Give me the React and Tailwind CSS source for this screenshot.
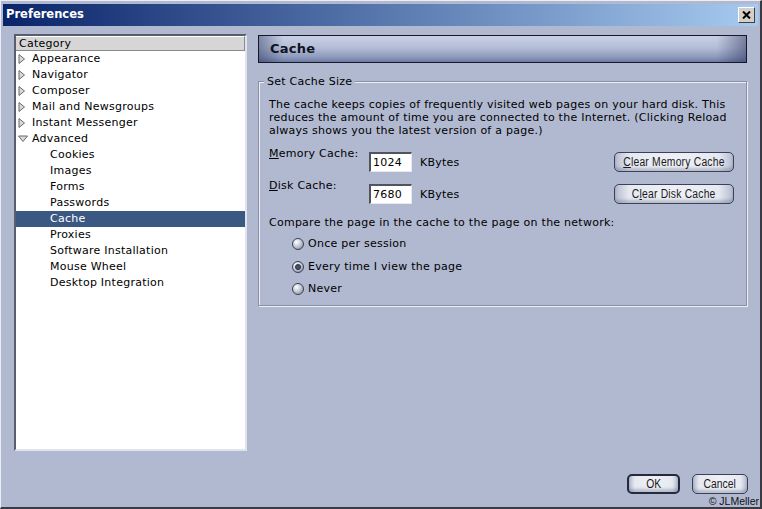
import React from "react";

const ui = { fontFamily: '"DejaVu Sans", Verdana, sans-serif' };
const narrow = { fontFamily: '"Liberation Sans", Arial, sans-serif' };

const tree = [
  { label: "Appearance", level: 0, twisty: "right" },
  { label: "Navigator", level: 0, twisty: "right" },
  { label: "Composer", level: 0, twisty: "right" },
  { label: "Mail and Newsgroups", level: 0, twisty: "right" },
  { label: "Instant Messenger", level: 0, twisty: "right" },
  { label: "Advanced", level: 0, twisty: "down" },
  { label: "Cookies", level: 1 },
  { label: "Images", level: 1 },
  { label: "Forms", level: 1 },
  { label: "Passwords", level: 1 },
  { label: "Cache", level: 1, selected: true },
  { label: "Proxies", level: 1 },
  { label: "Software Installation", level: 1 },
  { label: "Mouse Wheel", level: 1 },
  { label: "Desktop Integration", level: 1 },
];

const Twisty = ({ dir }) =>
  dir === "down" ? (
    <svg width="10" height="8" viewBox="0 0 10 8" className="shrink-0">
      <polygon points="0.5,1 9.5,1 5,6.5" fill="#d8d8d8" stroke="#6a6a6a" strokeWidth="1" />
    </svg>
  ) : (
    <svg width="8" height="10" viewBox="0 0 8 10" className="shrink-0">
      <polygon points="1,0.5 6.5,5 1,9.5" fill="#d8d8d8" stroke="#6a6a6a" strokeWidth="1" />
    </svg>
  );

const Radio = ({ checked }) => (
  <span className="w-[12px] h-[12px] rounded-full border border-[#3a3f52] bg-[radial-gradient(circle_at_35%_30%,#ffffff_0%,#c8ccd8_45%,#7c8296_100%)] flex items-center justify-center shrink-0">
    {checked && <span className="w-[6px] h-[6px] rounded-full bg-[#4a5068] border border-[#2a2e3c]" />}
  </span>
);

// gel style button, label squeezed horizontally like the narrow system font
const GelButton = ({ children, className = "", strong }) => (
  <button
    className={`h-[20px] rounded-[5px] ${
      strong ? "border-2 border-[#252a3c]" : "border border-[#3c4156]"
    } bg-[linear-gradient(to_right,#b5bccf_0%,#e6e9f1_12%,#eef0f5_50%,#e6e9f1_88%,#b5bccf_100%)] shadow-[inset_0_-3px_3px_rgba(90,100,130,0.35)] text-[12px] text-[#1a1a1a] flex items-center justify-center whitespace-nowrap ${className}`}
    style={narrow}
  >
    <span className="inline-block scale-x-[0.86]">{children}</span>
  </button>
);

const TextBox = ({ value }) => (
  <div className="w-[43px] h-[20px] bg-white border-t-2 border-l-2 border-t-[#50545e] border-l-[#50545e] border-b border-r border-b-[#e8eaf0] border-r-[#e8eaf0] pl-[2px] leading-[17px] text-[11px] text-black">
    {value}
  </div>
);

export default function App() {
  return (
    <div
      className="relative w-[762px] h-[509px] bg-[#b1b9d1] border-t border-l border-t-[#eceef4] border-l-[#eceef4] border-r-2 border-b-2 border-r-[#3a3a44] border-b-[#3a3a44] p-[2px] overflow-hidden"
      style={ui}
    >
      {/* Title bar */}
      <div className="mt-[1px] h-[22px] bg-[linear-gradient(to_right,#0a246a,#a6caf0)] flex items-center pl-[3px] pr-[3px]">
        <span className="text-white font-bold text-[11.5px]">Preferences</span>
        <div className="ml-auto w-[17px] h-[16px] bg-[#d4d0c8] border border-t-white border-l-white border-r-[#404040] border-b-[#404040] flex items-center justify-center">
          <svg width="9" height="8" viewBox="0 0 9 8">
            <path d="M1 0.5 L8 7.5 M8 0.5 L1 7.5" stroke="#000" strokeWidth="2" />
          </svg>
        </div>
      </div>

      <div className="pt-[8px] pl-[11px] pr-[10px] tracking-[0.25px]">
        <div className="flex gap-[11px]">
          {/* Category tree */}
          <div className="w-[233px] h-[417px] bg-white border-2 border-t-[#5a5e6c] border-l-[#5a5e6c] border-b-[#dfe3ee] border-r-[#dfe3ee]">
            <div className="h-[15px] bg-[#d6d6d6] border-b border-r border-[#8a8a8a] border-t border-t-white pl-[3px] text-[11px] leading-[13px] text-black">
              Category
            </div>
            {tree.map((r) => (
              <div
                key={r.label}
                className={`h-[16px] flex items-center text-[11px] ${
                  r.selected ? "bg-[#3b5883] text-white" : "text-black"
                }`}
              >
                <span className="w-[16px] pl-[2px] flex items-center justify-start">
                  {r.twisty && <Twisty dir={r.twisty} />}
                </span>
                {r.level === 1 && <span className="w-[18px]" />}
                <span>{r.label}</span>
              </div>
            ))}
          </div>

          {/* Right side */}
          <div className="w-[489px]">
            <div className="mt-[1px] h-[28px] border border-[#14182a] bg-[linear-gradient(to_right,rgba(40,50,90,0.45)_0%,rgba(40,50,90,0)_5%,rgba(40,50,90,0)_94%,rgba(40,50,90,0.5)_100%),linear-gradient(to_bottom,#c9d0e4_0%,#b4bdd7_45%,#8f9bbd_80%,#6d7aa2_100%)] flex items-center pl-[11px]">
              <span className="font-bold text-[13px] text-[#10141f]">Cache</span>
            </div>

            <div className="relative mt-[18px] border border-[#8890a8] shadow-[inset_1px_1px_0_#eef0f6,1px_1px_0_#eef0f6] pt-[16px] pl-[10px] pr-[12px] pb-[4px] text-[11px] text-black">
              <span className="absolute -top-[7px] left-[5px] px-[3px] bg-[#b1b9d1] leading-[13px]">
                Set Cache Size
              </span>

              <p className="leading-[13px]">
                The cache keeps copies of frequently visited web pages on your hard disk. This reduces the amount of time you are connected to the Internet. (Clicking Reload always shows you the latest version of a page.)
              </p>

              <div className="mt-[10px] h-[25px] flex items-start">
                <span className="w-[100px] leading-[13px]">
                  <span className="underline">M</span>emory Cache:
                </span>
                <div className="mt-[5px]">
                  <TextBox value="1024" />
                </div>
                <span className="ml-[8px] mt-[9px] leading-[13px]">KBytes</span>
                <GelButton className="ml-auto mt-[5px] w-[120px]">
                  <span className="underline">C</span>lear Memory Cache
                </GelButton>
              </div>

              <div className="mt-[7px] h-[25px] flex items-start">
                <span className="w-[100px] leading-[13px]">
                  <span className="underline">D</span>isk Cache:
                </span>
                <div className="mt-[5px]">
                  <TextBox value="7680" />
                </div>
                <span className="ml-[8px] mt-[9px] leading-[13px]">KBytes</span>
                <GelButton className="ml-auto mt-[5px] w-[120px]">
                  C<span className="underline">l</span>ear Disk Cache
                </GelButton>
              </div>

              <div className="mt-[12px] leading-[13px]">
                Compare the page in the cache to the page on the network:
              </div>

              <div className="mt-[4px] pl-[23px]">
                {[
                  ["Once per session", false],
                  ["Every time I view the page", true],
                  ["Never", false],
                ].map(([label, checked]) => (
                  <div key={label} className="h-[22.5px] flex items-center gap-[4px]">
                    <Radio checked={checked} />
                    <span>{label}</span>
                  </div>
                ))}
              </div>
            </div>
          </div>
        </div>

        <div className="mt-[23px] flex justify-end gap-[12px] tracking-normal">
          <GelButton strong className="w-[53px]">OK</GelButton>
          <GelButton className="w-[56px]">Cancel</GelButton>
        </div>
      </div>

      <span
        className="absolute right-[1px] bottom-[0px] text-[10.5px] leading-[11px] text-[#111]"
        style={{ fontFamily: '"Liberation Sans", Arial, sans-serif' }}
      >
        © JLMeller
      </span>
    </div>
  );
}
